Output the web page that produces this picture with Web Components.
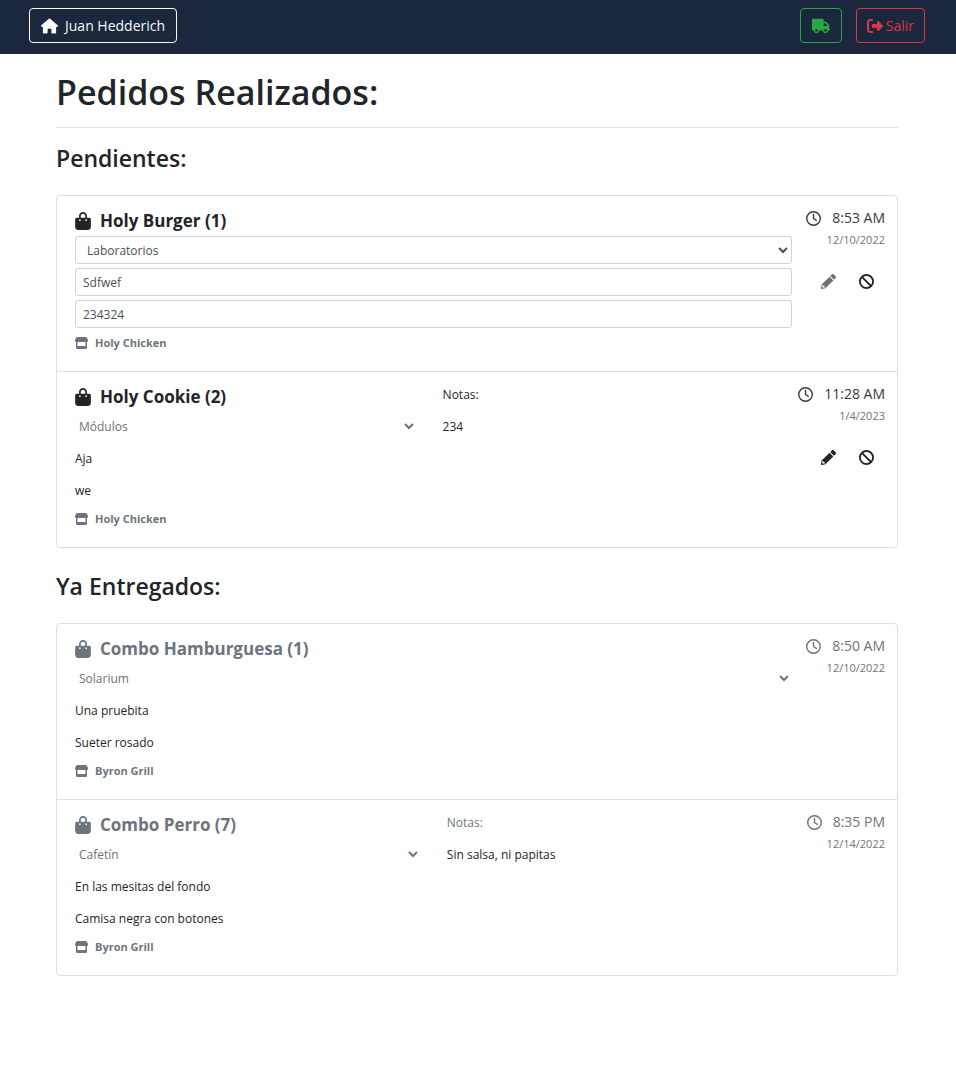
<!DOCTYPE html>
<html lang="es">
<head>
<meta charset="utf-8">
<meta name="viewport" content="width=device-width, initial-scale=1">
<title>Pedidos Realizados</title>
<style>
  body { margin: 0; background: #fff; color: #212529; font-family: "Open Sans", "Noto Sans", sans-serif; font-size: 14px; line-height: 20px; }
  main { padding: 16px 58px 40px 56px; }
  h1, h2 { margin: 0; font-weight: 600; }
  h1 { font-size: 34px; line-height: 44px; }
  h2 { font-size: 23px; line-height: 28px; }
  hr { margin: 13px 0 16px; border: 0; border-top: 1px solid #e5e5e5; }
  order-list { margin: 23px 0 24px; }
</style>
</head>
<body>
<top-bar user="Juan Hedderich"></top-bar>
<main>
  <h1>Pedidos Realizados:</h1>
  <hr>
  <h2>Pendientes:</h2>
  <order-list>
    <order-row name="Holy Burger" count="1" place="Laboratorios" spot="Sdfwef" detail="234324" store="Holy Chicken" time="8:53 AM" date="12/10/2022" editing actions></order-row>
    <order-row name="Holy Cookie" count="2" place="Módulos" spot="Aja" detail="we" notes="234" store="Holy Chicken" time="11:28 AM" date="1/4/2023" actions></order-row>
  </order-list>
  <h2>Ya Entregados:</h2>
  <order-list>
    <order-row name="Combo Hamburguesa" count="1" place="Solarium" spot="Una pruebita" detail="Sueter rosado" store="Byron Grill" time="8:50 AM" date="12/10/2022" done></order-row>
    <order-row name="Combo Perro" count="7" place="Cafetín" spot="En las mesitas del fondo" detail="Camisa negra con botones" notes="Sin salsa, ni papitas" store="Byron Grill" time="8:35 PM" date="12/14/2022" done></order-row>
  </order-list>
</main>
<script>
const ICONS = {
  house: ['0 0 576 512', 'M575.8 255.5c0 18-15 32.1-32 32.1h-32l.7 160.2c0 2.7-.2 5.4-.5 8.1V472c0 22.1-17.9 40-40 40H456c-1.1 0-2.2 0-3.3-.1c-1.4 .1-2.8 .1-4.2 .1H416 392c-22.1 0-40-17.9-40-40V448 384c0-17.7-14.3-32-32-32H256c-17.7 0-32 14.3-32 32v64 24c0 22.1-17.9 40-40 40H160 128.1c-1.5 0-3-.1-4.5-.2c-1.2 .1-2.4 .2-3.6 .2H104c-22.1 0-40-17.9-40-40V360c0-.9 0-1.9 .1-2.8V287.6H32c-18 0-32-14-32-32.1c0-9 3-17 10-24L266.4 8c7-7 15-8 22-8s15 2 21 7L564.8 231.5c8 7 12 15 11 24z'],
  truck: ['0 0 640 512', 'M48 0C21.5 0 0 21.5 0 48V368c0 26.5 21.5 48 48 48H64c0 53 43 96 96 96s96-43 96-96H384c0 53 43 96 96 96s96-43 96-96h32c17.7 0 32-14.3 32-32s-14.3-32-32-32V288 256 237.3c0-17-6.7-33.3-18.7-45.3L512 114.7c-12-12-28.3-18.7-45.3-18.7H416V48c0-26.5-21.5-48-48-48H48zM416 160h50.7L544 237.3V256H416V160zM112 416a48 48 0 1 1 96 0 48 48 0 1 1 -96 0zm368-48a48 48 0 1 1 0 96 48 48 0 1 1 0-96z'],
  exit: ['0 0 512 512', 'M377.9 105.9L500.7 228.7c7.2 7.2 11.3 17.1 11.3 27.3s-4.1 20.1-11.3 27.3L377.9 406.1c-6.4 6.4-15 9.9-24 9.9c-18.7 0-33.9-15.2-33.9-33.9l0-62.1-128 0c-17.7 0-32-14.3-32-32l0-64c0-17.7 14.3-32 32-32l128 0 0-62.1c0-18.7 15.2-33.9 33.9-33.9c9 0 17.6 3.6 24 9.9zM160 96L96 96c-17.7 0-32 14.3-32 32l0 256c0 17.7 14.3 32 32 32l64 0c17.7 0 32 14.3 32 32s-14.3 32-32 32l-64 0c-53 0-96-43-96-96L0 128C0 75 43 32 96 32l64 0c17.7 0 32 14.3 32 32s-14.3 32-32 32z'],
  bag: ['0 0 448 512', 'M160 112c0-35.3 28.7-64 64-64s64 28.7 64 64v48H160V112zm-48 48H48c-26.5 0-48 21.5-48 48V416c0 53 43 96 96 96H352c53 0 96-43 96-96V208c0-26.5-21.5-48-48-48H336V112C336 50.1 285.9 0 224 0S112 50.1 112 112v48zm24 48a24 24 0 1 1 0 48 24 24 0 1 1 0-48zm152 24a24 24 0 1 1 48 0 24 24 0 1 1 -48 0z'],
  clock: ['0 0 512 512', 'M464 256A208 208 0 1 1 48 256a208 208 0 1 1 416 0zM0 256a256 256 0 1 0 512 0A256 256 0 1 0 0 256zM232 120V256c0 8 4 15.5 10.7 20l96 64c11 7.4 25.9 4.4 33.3-6.7s4.4-25.9-6.7-33.3L280 243.2V120c0-13.3-10.7-24-24-24s-24 10.7-24 24z'],
  ban: ['0 0 512 512', 'M367.2 412.5L99.5 144.8C77.1 176.1 64 214.5 64 256c0 106 86 192 192 192c41.5 0 79.9-13.1 111.2-35.5zm45.3-45.3C434.9 335.9 448 297.5 448 256c0-106-86-192-192-192c-41.5 0-79.9 13.1-111.2 35.5L412.5 367.2zM0 256a256 256 0 1 1 512 0A256 256 0 1 1 0 256z'],
  pencil: ['0 0 512 512', 'M497.9 142.1l-46.1 46.1c-4.7 4.7-12.3 4.7-17 0l-111-111c-4.7-4.7-4.7-12.3 0-17l46.1-46.1c18.7-18.7 49.1-18.7 67.9 0l60.1 60.1c18.8 18.7 18.8 49.1 0 67.9zM284.2 99.8L21.6 362.4.4 483.9c-2.9 16.4 11.4 30.6 27.8 27.8l121.5-21.3 262.6-262.6c4.7-4.7 4.7-12.3 0-17l-111-111c-4.8-4.7-12.4-4.7-17.1 0zM88 424h48v36.3l-64.5 11.3-31.1-31.1L51.7 376H88v48z'],
  store: ['0 0 13 12', 'M2.500 0H10.500Q11.500 0 12 1L13 3V4Q13 5 12 5H1Q0 5 0 4V3L1 1Q1.500 0 2.500 0ZM1 5H2.500V9H10.500V5H12V10.500Q12 12 10.500 12H2.500Q1 12 1 10.500Z']
};

class AppIcon extends HTMLElement {
  connectedCallback() {
    const [box, path] = ICONS[this.getAttribute('name')];
    this.attachShadow({ mode: 'open' }).innerHTML = `
      <style>
        :host { display: block; flex: none; width: 16px; height: 16px; }
        svg { display: block; width: 100%; height: 100%; fill: currentColor; }
      </style>
      <svg viewBox="${box}" aria-hidden="true"><path fill-rule="${this.getAttribute('name') === 'pencil' ? 'evenodd' : 'nonzero'}" d="${path}"/></svg>`;
  }
}

class TopBar extends HTMLElement {
  connectedCallback() {
    this.attachShadow({ mode: 'open' }).innerHTML = `
      <style>
        :host { display: block; background: #1a273c; }
        nav { display: flex; align-items: center; gap: 14px; padding: 8px 31px 11px 29px; }
        a, button { box-sizing: border-box; display: flex; align-items: center; height: 35px; padding: 0 11px; border: 1px solid currentColor; border-radius: 4px; background: none; font: inherit; text-decoration: none; }
        a { gap: 7px; color: #f8f9fa; }
        a.home { margin-right: auto; }
        a.orders { color: #28a745; }
        button { gap: 3px; padding: 0 10px; color: #dc3545; }
        .home app-icon { width: 17px; }
        .orders app-icon { width: 18px; }
        button app-icon { width: 16px; }
      </style>
      <nav>
        <a class="home" href="#"><app-icon name="house"></app-icon><span>${this.getAttribute('user')}</span></a>
        <a class="orders" href="#" aria-label="Pedidos"><app-icon name="truck"></app-icon></a>
        <button type="button"><app-icon name="exit"></app-icon><span>Salir</span></button>
      </nav>`;
  }
}

class OrderList extends HTMLElement {
  connectedCallback() {
    this.attachShadow({ mode: 'open' }).innerHTML = `
      <style>
        :host { display: block; border: 1px solid #dfdfdf; border-radius: 4px; }
        ::slotted(order-row:not(:first-child)) { border-top: 1px solid #dfdfdf; }
      </style>
      <slot></slot>`;
  }
}

class OrderRow extends HTMLElement {
  connectedCallback() {
    const get = key => this.getAttribute(key);
    const editing = this.hasAttribute('editing');
    const lock = editing ? '' : 'readonly';
    this.attachShadow({ mode: 'open' }).innerHTML = `
      <style>
        :host { display: flex; gap: 14px; padding: 11px 12px 17px 18px; }
        :host([done]) h3, :host([done]) .time, :host([done]) label { color: #6c757d; }
        .body { flex: 1; display: grid; grid-auto-flow: column; grid-auto-columns: minmax(0, 1fr); gap: 26px; }
        .fields, .notes { display: flex; flex-direction: column; gap: 4px; }
        h3 { display: flex; align-items: center; gap: 9px; height: 27px; margin: 0 0 -2px; font-size: 17px; font-weight: 700; line-height: 26px; }
        h3 app-icon { height: 18px; }
        label { height: 25px; font-size: 12px; line-height: 24px; }
        input, select { box-sizing: border-box; width: 100%; height: 28px; margin: 0; padding: 0; border: 0; border-radius: 3px; background: transparent; color: #212529; font: inherit; font-size: 12px; }
        select:disabled { color: #495057; opacity: .8; }
        :host([editing]) input, :host([editing]) select { padding: 0 7px; border: 1px solid #ced4da; color: #495057; }
        .store { display: flex; align-items: center; gap: 7px; height: 22px; color: #6c757d; font-size: 11px; font-weight: 700; }
        .store app-icon { width: 13px; height: 12px; }
        .side { display: flex; flex-direction: column; align-items: flex-end; }
        .time { display: flex; align-items: center; gap: 11px; height: 22px; color: #343a40; }
        .time app-icon { width: 15px; height: 15px; }
        .date { height: 22px; color: #6c757d; font-size: 11px; line-height: 22px; }
        .actions { display: flex; margin-top: 12px; }
        button { display: flex; align-items: center; justify-content: center; width: 38px; height: 36px; padding: 0; border: 0; background: none; color: #212529; }
        button app-icon { width: 15px; height: 15px; }
        button:disabled { opacity: .65; }
      </style>
      <div class="body">
        <div class="fields">
          <h3><app-icon name="bag"></app-icon><span>${get('name')} (${get('count')})</span></h3>
          <select aria-label="Lugar" ${editing ? '' : 'disabled'}><option>${get('place')}</option></select>
          <input aria-label="Ubicación" value="${get('spot')}" ${lock}>
          <input aria-label="Referencia" value="${get('detail')}" ${lock}>
          <div class="store"><app-icon name="store"></app-icon><span>${get('store')}</span></div>
        </div>
        ${get('notes') ? `<div class="notes"><label for="notes">Notas:</label><input id="notes" value="${get('notes')}" readonly></div>` : ''}
      </div>
      <div class="side">
        <div class="time"><app-icon name="clock"></app-icon><span>${get('time')}</span></div>
        <div class="date">${get('date')}</div>
        ${this.hasAttribute('actions') ? `<div class="actions">
          <button type="button" aria-label="Editar" ${editing ? 'disabled' : ''}><app-icon name="pencil"></app-icon></button>
          <button type="button" aria-label="Cancelar"><app-icon name="ban"></app-icon></button>
        </div>` : ''}
      </div>`;
  }
}

customElements.define('app-icon', AppIcon);
customElements.define('top-bar', TopBar);
customElements.define('order-list', OrderList);
customElements.define('order-row', OrderRow);
</script>
</body>
</html>
